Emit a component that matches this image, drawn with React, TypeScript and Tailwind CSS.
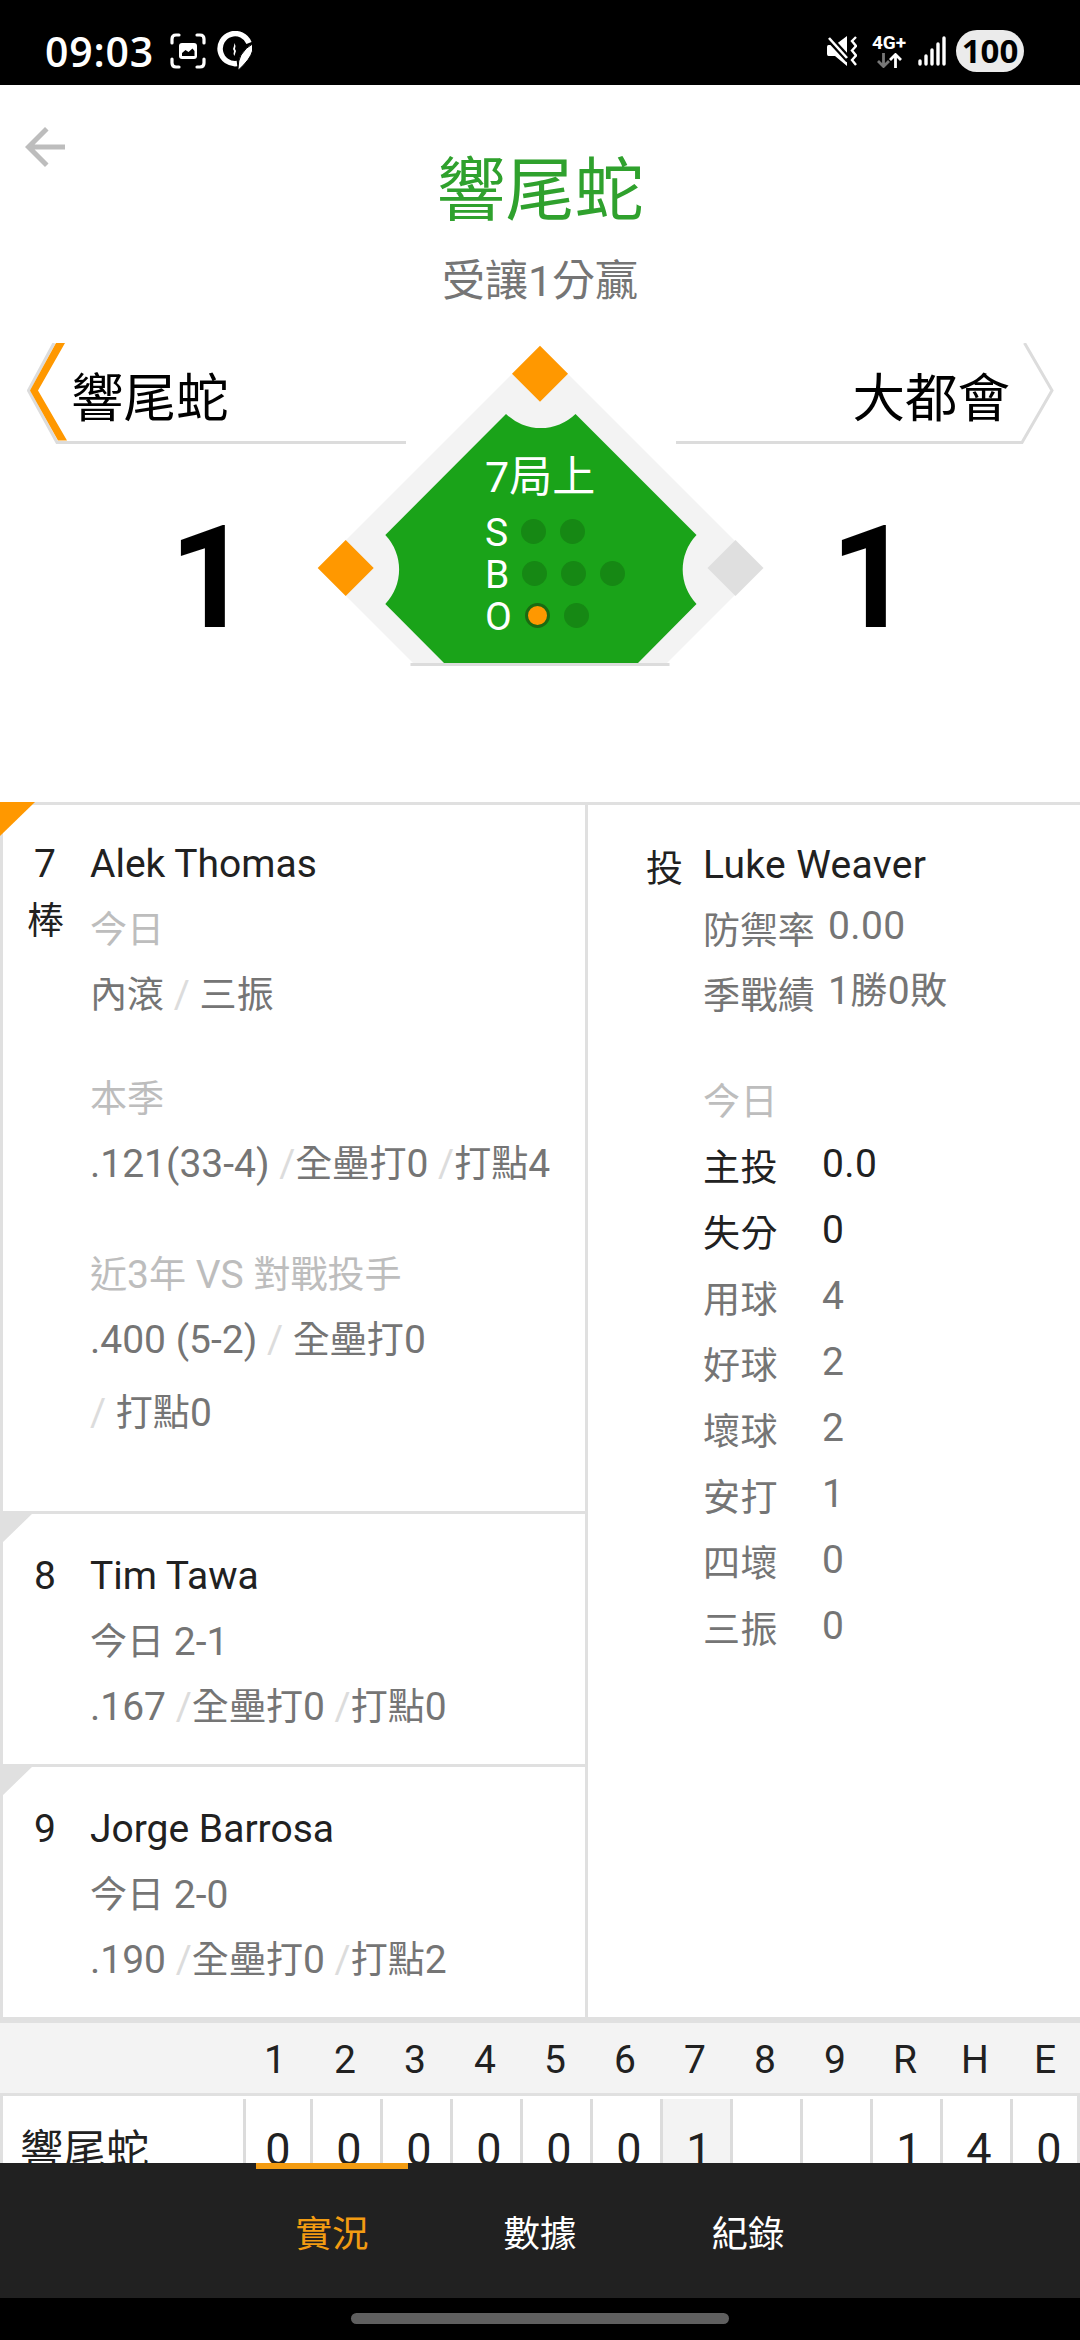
import React from 'react';

const ORANGE = '#ff9800';

const batters = [
  { order: '8', name: 'Tim Tawa', today: '今日 2-1', avg: '.167', hr: '全壘打0', rbi: '打點0' },
  { order: '9', name: 'Jorge Barrosa', today: '今日 2-0', avg: '.190', hr: '全壘打0', rbi: '打點2' },
];

const pitcherStats = [
  { label: '主投', value: '0.0', strong: true },
  { label: '失分', value: '0', strong: true },
  { label: '用球', value: '4' },
  { label: '好球', value: '2' },
  { label: '壞球', value: '2' },
  { label: '安打', value: '1' },
  { label: '四壞', value: '0' },
  { label: '三振', value: '0' },
];

const innings = ['1', '2', '3', '4', '5', '6', '7', '8', '9', 'R', 'H', 'E'];
const awayLine = ['0', '0', '0', '0', '0', '0', '1', '', '', '1', '4', '0'];
const CURRENT_INNING = 6;

const tabs = ['實況', '數據', '紀錄'];

// Han characters are set slightly smaller than the Latin text and digits beside them
const Txt = ({ children }: { children: string }) => (
  <>
    {children.split(/([\u4e00-\u9fff]+)/).map((part, i) =>
      i % 2 === 1 ? <span key={i} className="text-[0.95em] leading-none">{part}</span> : part
    )}
  </>
);

const StatusBar = () => (
  <div className="flex h-[85px] shrink-0 items-center justify-between bg-black pl-[45px] pr-[56px] pt-[17px] text-white">
    <div className="flex items-center">
      <span className="w-[125px] font-['Open_Sans',sans-serif] text-[41px] font-semibold leading-[68px] tracking-[0.8px]">09:03</span>
      <svg width="36" height="36" viewBox="0 0 36 36" fill="none" stroke="white" strokeWidth="3.2" strokeLinecap="round">
        <path d="M2 10V6q0-4 4-4h3M27 2h3q4 0 4 4v4M34 26v4q0 4-4 4h-3M9 34H6q-4 0-4-4v-4" />
        <rect x="9" y="10" width="18" height="16" rx="3" fill="white" stroke="none" />
        <path d="M12 23v-3l3.5-3 3 2 4-3.5 2 2.500V23z" fill="black" stroke="none" />
      </svg>
      <svg className="ml-[11px]" width="36" height="40" viewBox="0 0 36 40">
        <path d="M32 12A15 15 0 1 0 20 32.500" fill="none" stroke="white" strokeWidth="5.500" />
        <path d="M35.500 13v7q-2 8-14 19l-.5-1q0-9 3-14 5-8 11.500-11z" fill="white" stroke="black" strokeWidth="1" />
        <path d="M17.500 12l1 3-.5 3 1 2-1 3-.5 2-1-2 .5-3-1-2 1-3z" fill="white" />
      </svg>
    </div>
    <div className="flex items-center">
      <svg width="30" height="30" viewBox="0 0 30 30">
        <path d="M1.500 9H8L20 0v30L8 20H1.500Q0 20 0 18V11Q0 9 1.500 9z" fill="white" />
        <path d="M0 0L22 24" stroke="black" strokeWidth="7" />
        <path d="M2 2L20 22" stroke="white" strokeWidth="2.600" />
        <path d="M29 1l-4 4 4 5-4 4.500 4 5-4 4.500 4 5" fill="none" stroke="white" strokeWidth="2.400" />
      </svg>
      <div className="ml-[15px] flex w-[34px] flex-col items-center">
        <span className="font-['Roboto',sans-serif] text-[19px] font-bold leading-[15px]">4G+</span>
        <svg className="mt-[3px]" width="25" height="15" viewBox="0 0 25 15" fill="none" strokeWidth="2.800">
          <path d="M6.500 0v13M1 8l5.500 5.500L12 8" stroke="#777" />
          <path d="M18.500 15V2M13 7l5.500-5.500L24 7" stroke="white" />
        </svg>
      </div>
      <svg className="ml-[12px]" width="28" height="30" viewBox="0 0 28 30" stroke="white" strokeWidth="3.400" strokeLinecap="round">
        <path d="M2 25v3M8 20v8M14 14v14M20 8v20M26 2v26" />
      </svg>
      <div className="ml-[10px] flex h-[42px] w-[68px] items-center justify-center rounded-full bg-[#ebebeb] font-['Open_Sans',sans-serif] text-[33px] font-bold text-black">
        100
      </div>
    </div>
  </div>
);

// One ball / strike / out row; lit lamps are orange with a dark ring
const CountRow = ({ label, total, lit = 0 }: { label: string; total: number; lit?: number }) => (
  <div className="flex h-[42px] items-center">
    <span className="mr-[13px] pt-[4px]">{label}</span>
    <div className="flex gap-[14px]">
      {Array.from({ length: total }, (_, i) => (
        <span
          key={i}
          className={
            i < lit
              ? 'size-[25px] rounded-full border-[3px] border-[#1b6a12] bg-[#ff9800]'
              : 'size-[25px] rounded-full bg-[#168814]'
          }
        />
      ))}
    </div>
  </div>
);

const Diamond = () => (
  <div className="absolute left-[317px] top-0 h-[323px] w-[447px]">
    {/* field, bases and home line */}
    <svg width="447" height="323" viewBox="317 343 447 323">
      <path d="M540 346L762 568 667 663H413L318 568z" fill="#f3f3f3" />
      <path
        d="M506 414A50 50 0 0 0 575.500 414L696.500 535A50 50 0 0 0 696.500 604L638 663H444L385.300 604A50 50 0 0 0 385.300 535z"
        fill="#1aa319"
      />
      <path d="M540 345.700l28 28-28 28-28-28z" fill={ORANGE} />
      <path d="M345.700 540l28 28-28 28-28-28z" fill={ORANGE} />
      <path d="M735.500 540l28 28-28 28-28-28z" fill="#dfdfdf" />
      <path d="M410.500 664.500H669.500" stroke="#dcdcdc" strokeWidth="3" />
    </svg>
    <div className="absolute left-[168px] top-[109px] text-[39px] leading-[42px] text-white">
      <div className="mb-[8px] text-[43px] leading-[50px]">7局上</div>
      <CountRow label="S" total={2} />
      <CountRow label="B" total={3} />
      <CountRow label="O" total={2} lit={1} />
    </div>
  </div>
);

const Slash = () => <span className="text-[#dcdcdc]">/</span>;

const Header = () => (
  <div className="h-[717px] shrink-0">
    <div className="grid h-[258px] grid-cols-[180px_1fr_180px]">
      <svg className="ml-[15px] mt-[32px]" width="60" height="60" viewBox="0 0 24 24" fill="#bdbdbd">
        <path d="M20 11H7.830l5.590-5.590L12 4l-8 8 8 8 1.410-1.410L7.830 13H20v-2z" />
      </svg>
      <div className="text-center">
        <div className="mt-[65px] text-[69px] leading-[84px] text-[#2fa12d]">響尾蛇</div>
        <div className="mt-[17px] text-[43px] leading-[60px] text-[#757575]">受讓1分贏</div>
      </div>
    </div>
    <div className="relative flex justify-between text-black">
      <div className="ml-[27px] w-[379px]">
        <div className="flex h-[101px]">
          <svg className="shrink-0" width="42" height="101" viewBox="0 0 42 101" fill="none">
            <path d="M27 0L1.500 47.500 30 99.500H42" stroke="#dcdcdc" strokeWidth="3" />
            <path d="M29 0h9L11 47.500 40 97.500h-9L3 47.500z" fill={ORANGE} />
          </svg>
          <div className="flex-1 border-b-[3px] border-[#dcdcdc] pl-[2px] pt-[22px] text-[52.5px] leading-[68px]">
            響尾蛇
          </div>
        </div>
        <div className="ml-[78px] mt-[52px] w-[210px] text-center text-[142px] font-bold leading-[166px]">1</div>
      </div>
      <div className="mr-[26px] w-[378px]">
        <div className="flex h-[101px]">
          <div className="flex-1 border-b-[3px] border-[#dcdcdc] pt-[22px] text-right text-[52.5px] leading-[68px]">
            <span className="-mr-[1px]">大都會</span>
          </div>
          <svg className="shrink-0" width="45" height="101" viewBox="0 0 45 101" fill="none">
            <path d="M15.500 0L43 47.500 13 99.500H0" stroke="#dcdcdc" strokeWidth="3" />
          </svg>
        </div>
        <div className="ml-[90px] mt-[52px] w-[210px] text-center text-[142px] font-bold leading-[166px]">1</div>
      </div>
      <Diamond />
    </div>
  </div>
);

// Folded corner drawn over the card's top-left border
const Corner = ({ active = false }: { active?: boolean }) => (
  <span
    className={`absolute -left-[3px] -top-[3px] h-[34px] w-[35px] [clip-path:polygon(0_0,100%_0,0_100%)] ${
      active ? 'bg-[#ff9800]' : 'bg-[#e0e0e0]'
    }`}
  />
);

const Lineup = () => (
  <div className="flex w-[588px] flex-col border-l-[3px] border-r-[3px] border-[#e0e0e0] text-[39px] leading-[65.5px] text-[#757575]">
    <div className="relative flex h-[706px] pt-[27px]">
      <Corner active />
      <div className="w-[84px] text-center text-[#212121]">
        <div className="h-[57px]">7</div>
        <div className="pl-[1px]"><Txt>棒</Txt></div>
      </div>
      <div className="pl-[3px]">
        <div className="text-[#212121]">Alek Thomas</div>
        <div className="text-[#bdbdbd]"><Txt>今日</Txt></div>
        <div>
          <Txt>內滾</Txt> <Slash /> <Txt>三振</Txt>
        </div>
        <div className="mt-[38px] text-[#bdbdbd]"><Txt>本季</Txt></div>
        <div>
          .121(33-4) <Slash /><Txt>全壘打0</Txt> <Slash /><Txt>打點4</Txt>
        </div>
        <div className="mt-[45px] text-[#bdbdbd]"><Txt>近3年 VS 對戰投手</Txt></div>
        <div>
          .400 (5-2) <Slash /> <Txt>全壘打0</Txt>
        </div>
        <div className="mt-[7px]">
          <Slash /> <Txt>打點0</Txt>
        </div>
      </div>
    </div>
    {batters.map((b) => (
      <div key={b.order} className="relative flex h-[253px] border-t-[3px] border-[#e0e0e0] pt-[30px]">
        <Corner />
        <div className="w-[84px] text-center text-[#212121]">{b.order}</div>
        <div className="pl-[3px]">
          <div className="text-[#212121]">{b.name}</div>
          <div><Txt>{b.today}</Txt></div>
          <div>
            {b.avg} <Slash /><Txt>{b.hr}</Txt> <Slash /><Txt>{b.rbi}</Txt>
          </div>
        </div>
      </div>
    ))}
  </div>
);

const Pitcher = () => (
  <div className="flex flex-1 pt-[27px] text-[39px] leading-[66px] tracking-[0.35px] text-[#757575]">
    <div className="w-[115px] pl-[58px] pt-[4px] text-[#212121]"><Txt>投</Txt></div>
    <div>
      <div className="text-[#212121]">Luke Weaver</div>
      <div className="flex h-[65px]">
        <span className="w-[125px]"><Txt>防禦率</Txt></span>
        <span className="-mt-[5px]">0.00</span>
      </div>
      <div className="flex h-[66px]">
        <span className="w-[125px]"><Txt>季戰績</Txt></span>
        <span className="-mt-[5px]"><Txt>1勝0敗</Txt></span>
      </div>
      <div className="mt-[40px] text-[#bdbdbd]"><Txt>今日</Txt></div>
      {pitcherStats.map((s) => (
        <div key={s.label} className={s.strong ? 'flex h-[66px] text-[#212121]' : 'flex h-[66px]'}>
          <span className="w-[119px]"><Txt>{s.label}</Txt></span>
          <span className="-mt-[4px]">{s.value}</span>
        </div>
      ))}
    </div>
  </div>
);

const BoxScore = () => (
  <div className="h-[146px] shrink-0 overflow-hidden border-t-[6px] border-[#e0e0e0] text-[#212121]">
    <div className="flex h-[73px] border-b-[3px] border-[#e0e0e0] bg-[#f3f3f3] pl-[240px] text-[39px] leading-[74px]">
      {innings.map((n) => (
        <span key={n} className="h-[70px] w-[70px] text-center">{n}</span>
      ))}
    </div>
    <div className="flex h-[110px] border-x-[3px] border-[#e0e0e0]">
      <div className="w-[240px] pl-[17px] text-[43px] leading-[110px]">響尾蛇</div>
      <div className="mt-[3px] flex w-[834px] text-[45px] leading-[101px]">
        {awayLine.map((runs, i) => (
          <span
            key={i}
            className={`shrink-0 border-l-[3px] border-[#dcdcdc] text-center ${
              i === 0 ? 'w-[67px]' : 'w-[70px] pl-[5px]'
            } ${i === CURRENT_INNING ? 'bg-[#f3f3f3]' : ''}`}
          >
            {runs}
          </span>
        ))}
      </div>
    </div>
  </div>
);

const TabBar = () => (
  <div className="flex h-[135px] shrink-0 justify-center gap-[56px] bg-[#212121]">
    {tabs.map((t, i) => (
      <div
        key={t}
        className={`w-[152px] border-t-[6px] text-center text-[36.500px] leading-[132px] ${
          i === 0 ? 'border-[#f39c12] text-[#f39c12]' : 'border-transparent text-white'
        }`}
      >
        {t}
      </div>
    ))}
  </div>
);

export default function App() {
  return (
    <div className="flex h-[2340px] w-[1080px] flex-col overflow-hidden bg-white font-['Roboto','Noto_Sans_CJK_TC',sans-serif]">
      <StatusBar />
      <Header />
      <div className="flex h-[1215px] shrink-0 border-t-[3px] border-[#e0e0e0]">
        <Lineup />
        <Pitcher />
      </div>
      <BoxScore />
      <TabBar />
      <div className="flex h-[42px] items-center justify-center bg-black pb-[2px]">
        <div className="h-[11px] w-[378px] rounded-full bg-[#5f5f5f]" />
      </div>
    </div>
  );
}
